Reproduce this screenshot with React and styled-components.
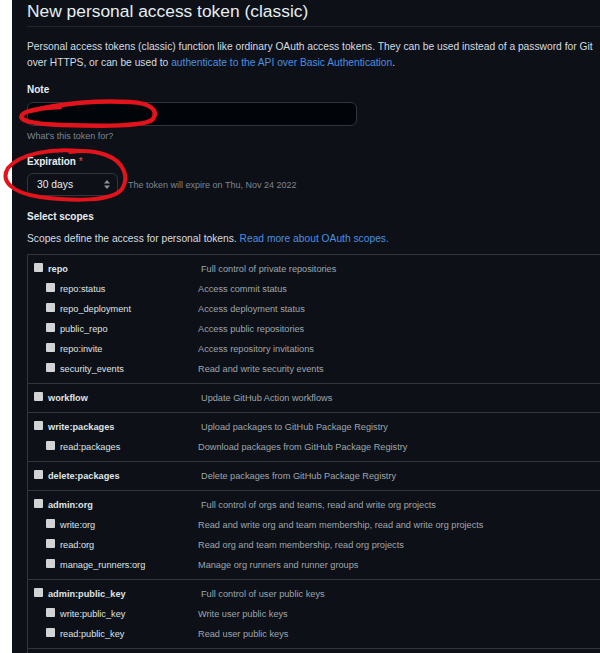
import styled, { createGlobalStyle } from "styled-components";

const GlobalStyle = createGlobalStyle`
  html, body {
    margin: 0;
    height: 653px;
    overflow: hidden;
    background: #ffffff;
    font-family: "Liberation Sans", Arial, sans-serif;
  }
`;

const scopes = [
  {
    name: "repo",
    desc: "Full control of private repositories",
    children: [
      ["repo:status", "Access commit status"],
      ["repo_deployment", "Access deployment status"],
      ["public_repo", "Access public repositories"],
      ["repo:invite", "Access repository invitations"],
      ["security_events", "Read and write security events"],
    ],
  },
  { name: "workflow", desc: "Update GitHub Action workflows" },
  {
    name: "write:packages",
    desc: "Upload packages to GitHub Package Registry",
    children: [["read:packages", "Download packages from GitHub Package Registry"]],
  },
  { name: "delete:packages", desc: "Delete packages from GitHub Package Registry" },
  {
    name: "admin:org",
    desc: "Full control of orgs and teams, read and write org projects",
    children: [
      ["write:org", "Read and write org and team membership, read and write org projects"],
      ["read:org", "Read org and team membership, read org projects"],
      ["manage_runners:org", "Manage org runners and runner groups"],
    ],
  },
  {
    name: "admin:public_key",
    desc: "Full control of user public keys",
    children: [
      ["write:public_key", "Write user public keys"],
      ["read:public_key", "Read user public keys"],
    ],
  },
];

const App = () => {
  return (
    <Shell>
      <GlobalStyle />
      <Gutter />
      <Main>
        <Content>
          <Title>New personal access token (classic)</Title>
          <Intro>
            Personal access tokens (classic) function like ordinary OAuth access tokens. They can be used instead of a password for Git
            <br />
            over HTTPS, or can be used to <Link>authenticate to the API over Basic Authentication</Link>.
          </Intro>

          <Label>Note</Label>
          <NoteInput />
          <Hint>What's this token for?</Hint>

          <Label $top={13}>
            Expiration <Required>*</Required>
          </Label>
          <ExpiryRow>
            <Select>
              30 days
              <svg width="6" height="9" viewBox="0 0 6 9">
                <path d="M3 0 L6 3.4 H0 Z M3 9 L6 5.6 H0 Z" fill="#8b949e" />
              </svg>
            </Select>
            <Hint $inline>The token will expire on Thu, Nov 24 2022</Hint>
          </ExpiryRow>

          <Label $top={14}>Select scopes</Label>
          <Intro $top={7}>
            Scopes define the access for personal tokens. <Link>Read more about OAuth scopes.</Link>
          </Intro>

          <ScopeTable>
            {scopes.map((group) => (
              <Group key={group.name}>
                <ScopeRow>
                  <Box />
                  <ScopeName $width={153} $bold>{group.name}</ScopeName>
                  <ScopeDesc>{group.desc}</ScopeDesc>
                </ScopeRow>
                {(group.children || []).map(([name, desc]) => (
                  <ScopeRow key={name} $child>
                    <Box />
                    <ScopeName $width={138}>{name}</ScopeName>
                    <ScopeDesc>{desc}</ScopeDesc>
                  </ScopeRow>
                ))}
              </Group>
            ))}
          </ScopeTable>
        </Content>
      </Main>

      <Scribbles width="600" height="653" viewBox="0 0 600 653">
        <path
          d="M60 107 C40 108 26 110 22 115 C18 121 34 124 62 125 C100 126 146 127 153 119 C159 110 150 103 130 102 C100 100 62 103 30 111"
          fill="none"
          stroke="#e3131b"
          strokeWidth="4.5"
          strokeLinecap="round"
        />
        <path
          d="M80 151 C50 148 20 154 8 168 C0 181 12 193 40 197 C72 201 112 202 122 189 C129 178 125 162 106 155 C95 151 84 150 70 152"
          fill="none"
          stroke="#e3131b"
          strokeWidth="4"
          strokeLinecap="round"
        />
      </Scribbles>
    </Shell>
  );
};

const Shell = styled.div`
  position: relative;
  display: flex;
  height: 653px;
  overflow: hidden;
`;

const Gutter = styled.div`
  width: 12px;
  flex-shrink: 0;
  background: #ffffff;
`;

const Main = styled.main`
  flex: 1;
  background: #0d1117;
  padding-left: 15px;
  overflow: hidden;
`;

const Content = styled.div`
  width: 640px;
  color: #e6edf3;
`;

const Title = styled.h1`
  margin: 0;
  padding: 0 0 4px;
  font-size: 17.4px;
  line-height: 22px;
  font-weight: 400;
  color: #e6edf3;
  border-bottom: 1px solid #21262d;
`;

const Intro = styled.p`
  margin: ${(p) => p.$top ?? 12}px 0 0;
  font-size: 10.25px;
  line-height: 16px;
  color: #d6dce2;
`;

const Link = styled.span`
  color: #4a8fe0;
`;

const Label = styled.div`
  margin-top: ${(p) => p.$top ?? 12}px;
  font-size: 10px;
  line-height: 14px;
  font-weight: 700;
  color: #e6edf3;
`;

const Required = styled.span`
  color: #f85149;
  font-weight: 400;
`;

const NoteInput = styled.div`
  margin-top: 5px;
  width: 330px;
  height: 24px;
  box-sizing: border-box;
  background: #010409;
  border: 1px solid #30363d;
  border-radius: 6px;
`;

const Hint = styled.div`
  margin: ${(p) => (p.$inline ? "0 0 0 10px" : "4px 0 0")};
  font-size: 9px;
  line-height: 12px;
  color: #7d8590;
`;

const ExpiryRow = styled.div`
  display: flex;
  align-items: center;
  margin-top: 4px;
`;

const Select = styled.div`
  display: flex;
  align-items: center;
  justify-content: space-between;
  width: 91px;
  height: 23px;
  box-sizing: border-box;
  padding: 0 7px 0 9px;
  border: 1px solid #30363d;
  border-radius: 6px;
  background: #0d1117;
  font-size: 10.3px;
  color: #e6edf3;
`;

const ScopeTable = styled.div`
  margin-top: 7px;
  padding-bottom: 12px;
  border-top: 1px solid #30363d;
  border-left: 1px solid #30363d;
`;

const Group = styled.div`
  padding: 4px 0 4px 6px;
  border-bottom: 1px solid #30363d;
`;

const ScopeRow = styled.div`
  display: flex;
  align-items: flex-start;
  height: 20px;
  padding-left: ${(p) => (p.$child ? 12 : 0)}px;
`;

const Box = styled.span`
  width: 9px;
  height: 9px;
  margin-top: 4px;
  flex-shrink: 0;
  border-radius: 1px;
  background: #d2d3d5;
`;

const ScopeName = styled.span`
  width: ${(p) => p.$width}px;
  margin-left: 5px;
  flex-shrink: 0;
  font-size: 9.2px;
  line-height: 20px;
  font-weight: ${(p) => (p.$bold ? 700 : 400)};
  color: #dfe4e9;
`;

const ScopeDesc = styled.span`
  font-size: 9.2px;
  line-height: 20px;
  color: #9ea5ad;
  white-space: nowrap;
`;

const Scribbles = styled.svg`
  position: absolute;
  top: 0;
  left: 0;
  pointer-events: none;
`;

export default App;
